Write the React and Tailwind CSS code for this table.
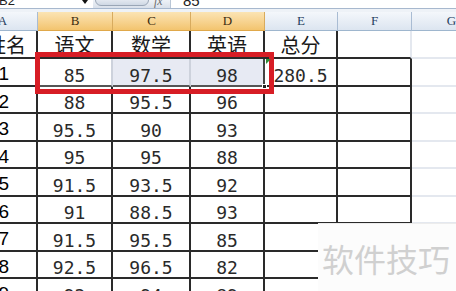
import React from "react";

const WC = ["w-[38px]", "w-[75px]", "w-[78px]", "w-[74px]", "w-[73px]", "w-[74px]", "w-[80px]"];
const CJK = "font-['Noto_Sans_CJK_SC','Noto_Sans',sans-serif]";
const NUM = "font-['DejaVu_Sans_Mono','Liberation_Mono',monospace]";
const LAB = "font-['Liberation_Sans',Arial,sans-serif]";
const SERIF = "font-['Liberation_Serif',serif]";

const rows = [
  ["1", "85", "97.5", "98", "280.5", "h-[28px]"],
  ["2", "88", "95.5", "96", "", "h-[27px]"],
  ["3", "95.5", "90", "93", "", "h-[28px]"],
  ["4", "95", "95", "88", "", "h-[27px]"],
  ["5", "91.5", "93.5", "92", "", "h-[28px]"],
  ["6", "91", "88.5", "93", "", "h-[27px]"],
  ["7", "91.5", "95.5", "85", "", "h-[28px]"],
  ["8", "92.5", "96.5", "82", "", "h-[27px]"],
  ["9", "92", "94", "89", "", "h-[28px]"],
];

function HeaderCell({ w, children, sel }) {
  return (
    <div
      className={
        w +
        " shrink-0 h-full flex items-center justify-center border-r border-b text-[13px] " +
        SERIF +
        " " +
        (sel
          ? "bg-gradient-to-b from-[#fbe4b4] to-[#f3c46e] border-r-[#d8ab5e] border-b-[#e0a84a] text-[#3a2a10]"
          : "bg-gradient-to-b from-[#f4f7fb] to-[#dce5f0] border-r-[#a9bcd3] border-b-[#9eb6ce] text-[#27415f]")
      }
    >
      {children}
    </div>
  );
}

const selCls = [
  "bg-white border-r-[#cdd2dc] border-b-[#555]",
  "bg-[#e7eaf3] border-r-[#cdd2dc] border-b-[#555]",
  "bg-[#e7eaf3] border-r-[#444] border-b-[#555]",
  "border-[#2a2a2a]",
];

export default function App() {
  return (
    <div className="relative w-[456px] h-[291px] overflow-hidden bg-white">
      {/* formula bar */}
      <div className="flex h-[9px] border-b border-[#a7b8ce] overflow-hidden">
        <div className="relative w-[93px] shrink-0 bg-white overflow-hidden">
          <span className={"absolute left-[-1px] top-[-9px] text-[13px] text-[#222] " + LAB}>B2</span>
          <div className="absolute left-[82px] top-0 w-0 h-0 border-t-[4px] border-t-[#111] border-x-[3px] border-x-transparent" />
        </div>
        <div className="relative w-[77px] shrink-0 bg-gradient-to-b from-[#eef2f7] to-[#d9e0ea] overflow-hidden">
          <div className="absolute left-[2px] top-[-6px] w-[54px] h-[12px] rounded-full border border-[#9aa6b6] bg-gradient-to-b from-[#f7f9fc] to-[#cfd8e4]" />
          <span className={"absolute left-[61px] top-[-8px] text-[12px] italic text-[#6b6b6b] " + SERIF}>fx</span>
        </div>
        <div className="relative flex-1 bg-white border-l border-[#b9c6d6] overflow-hidden">
          <span className={"absolute left-[12px] top-[-10px] text-[15px] text-[#222] " + LAB}>85</span>
        </div>
      </div>
      <div className="h-[3px] bg-[#eef2f7]" />

      {/* column headers */}
      <div className="flex h-[19px]">
        <HeaderCell w={WC[0]}>
          <span className="relative left-[-16px]">A</span>
        </HeaderCell>
        <HeaderCell w={WC[1]} sel>B</HeaderCell>
        <HeaderCell w={WC[2]} sel>C</HeaderCell>
        <HeaderCell w={WC[3]} sel>D</HeaderCell>
        <HeaderCell w={WC[4]}>E</HeaderCell>
        <HeaderCell w={WC[5]}>F</HeaderCell>
        <HeaderCell w={WC[6]}>G</HeaderCell>
      </div>

      {/* title row */}
      <div className="flex h-[28px]">
        <div className={WC[0] + " shrink-0 flex items-center justify-end pr-[10px] pt-[2px] border-r-2 border-b-2 border-[#2a2a2a] text-[20px] text-[#1a1a1a] whitespace-nowrap " + CJK}>
          姓名
        </div>
        {["语文", "数学", "英语", "总分"].map((t, i) => (
          <div key={t} className={WC[i + 1] + " shrink-0 flex items-center justify-center pt-[2px] border-r-2 border-b-2 border-[#2a2a2a] text-[20px] text-[#1a1a1a] " + CJK}>
            {t}
          </div>
        ))}
        <div className={WC[5] + " shrink-0 border-r-2 border-r-[#e4e8ef] border-b-2 border-b-[#2a2a2a]"} />
        <div className={WC[6] + " shrink-0 border-b-2 border-[#e4e8ef]"} />
      </div>

      {/* data rows */}
      {rows.map(([lab, b, c, d, e, h], ri) => (
        <div key={lab} className={"flex " + h}>
          <div className={WC[0] + " shrink-0 flex items-center justify-end pr-[27px] pt-[5px] border-r-2 border-b-2 border-[#2a2a2a] text-[19px] text-black " + LAB}>
            {lab}
          </div>
          {[b, c, d, e].map((v, ci) => (
            <div
              key={ci}
              className={
                WC[ci + 1] +
                " shrink-0 flex items-center justify-center pt-[6px] border-r-2 border-b-2 text-[18px] text-[#2a2a2a] whitespace-nowrap " +
                NUM +
                " " +
                (ri === 0 ? selCls[ci] : "border-[#2a2a2a]")
              }
            >
              {v}
            </div>
          ))}
          <div className={WC[5] + " shrink-0 border-r-2 border-b-2 border-[#2a2a2a]"} />
          <div className={WC[6] + " shrink-0 border-b-2 border-[#e4e8ef]"} />
        </div>
      ))}

      {/* red highlight box */}
      <div className="absolute left-[35px] top-[52px] w-[239px] h-[42px] border-[5px] border-[#d71d25]" />
      {/* fill handle */}
      <div className="absolute left-[262px] top-[84px] w-[5px] h-[5px] bg-[#222] border border-white" />
      {/* green error triangle */}
      <div className="absolute left-[266px] top-[59px] w-0 h-0 border-t-[5px] border-t-[#2e8b34] border-r-[5px] border-r-transparent" />

      {/* watermark */}
      <div className="absolute left-[318px] top-[223px] right-0 bottom-0 bg-[#fcfcfc] border-t border-[#ececec] flex items-center pl-[4px]">
        <span className={"text-[32px] leading-none text-[#d0d0d0] whitespace-nowrap " + CJK}>软件技巧</span>
      </div>
    </div>
  );
}
